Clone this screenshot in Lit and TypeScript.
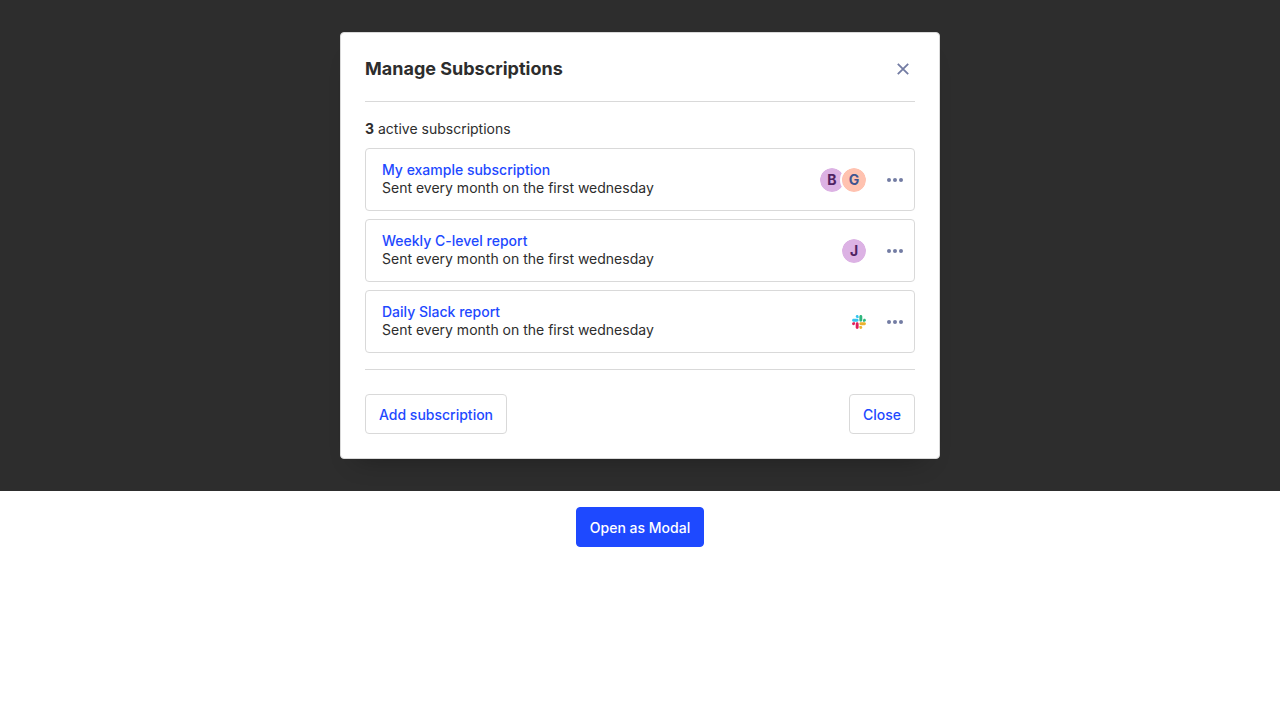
import { LitElement, html, css, svg } from "lit";
import { customElement } from "lit/decorators.js";
import { classMap } from "lit/directives/class-map.js";

interface Recipient {
  initial: string;
  tone: "plum" | "peach";
}

interface Subscription {
  title: string;
  schedule: string;
  recipients: Recipient[];
  slack?: boolean;
}

const subscriptions: Subscription[] = [
  {
    title: "My example subscription",
    schedule: "Sent every month on the first wednesday",
    recipients: [
      { initial: "B", tone: "plum" },
      { initial: "G", tone: "peach" },
    ],
  },
  {
    title: "Weekly C-level report",
    schedule: "Sent every month on the first wednesday",
    recipients: [{ initial: "J", tone: "plum" }],
  },
  {
    title: "Daily Slack report",
    schedule: "Sent every month on the first wednesday",
    recipients: [],
    slack: true,
  },
];

const slackLogo = html`
  <svg class="slack" viewBox="0 0 124 124" role="img" aria-label="Slack">
    ${svg`
      <path fill="#e01e5a" d="M26.4 78.2c0 7.1-5.8 12.9-12.9 12.9S.6 85.3.6 78.2s5.8-12.9 12.9-12.9h12.9v12.9zM32.9 78.2c0-7.1 5.8-12.9 12.9-12.9s12.9 5.8 12.9 12.9v32.3c0 7.1-5.8 12.9-12.9 12.9s-12.9-5.8-12.9-12.9V78.2z"/>
      <path fill="#36c5f0" d="M45.8 26.4c-7.1 0-12.9-5.8-12.9-12.9S38.7.6 45.8.6s12.9 5.8 12.9 12.9v12.9H45.8zM45.8 32.9c7.1 0 12.9 5.8 12.9 12.9s-5.8 12.9-12.9 12.9H13.5C6.4 58.7.6 52.9.6 45.8s5.8-12.9 12.9-12.9h32.3z"/>
      <path fill="#2eb67d" d="M97.6 45.8c0-7.1 5.8-12.9 12.9-12.9s12.9 5.8 12.9 12.9-5.8 12.9-12.9 12.9H97.6V45.8zM91.1 45.8c0 7.1-5.8 12.9-12.9 12.9s-12.9-5.8-12.9-12.9V13.5C65.3 6.4 71.1.6 78.2.6s12.9 5.8 12.9 12.9v32.3z"/>
      <path fill="#ecb22e" d="M78.2 97.6c7.1 0 12.9 5.8 12.9 12.9s-5.8 12.9-12.9 12.9-12.9-5.8-12.9-12.9V97.6h12.9zM78.2 91.1c-7.1 0-12.9-5.8-12.9-12.9s5.8-12.9 12.9-12.9h32.3c7.1 0 12.9 5.8 12.9 12.9s-5.8 12.9-12.9 12.9H78.2z"/>
    `}
  </svg>
`;

@customElement("app-root")
export class AppRoot extends LitElement {
  static styles = css`
    :host {
      display: block;
      font-family: Inter, sans-serif;
      font-size: 14px;
      line-height: 18px;
      color: #2d2d2d;
    }
    * {
      box-sizing: border-box;
    }
    .backdrop {
      display: flex;
      justify-content: center;
      padding: 32px;
      background: #2d2d2d;
    }
    .modal {
      width: 100%;
      max-width: 600px;
      padding: 24px;
      background: #fff;
      border: 1px solid #d9d9d9;
      border-radius: 4px;
      box-shadow: 0 16px 24px -16px rgba(0, 0, 0, 0.3);
    }
    header {
      display: flex;
      align-items: center;
      justify-content: space-between;
      padding-bottom: 20px;
      border-bottom: 1px solid #d9d9d9;
    }
    h1 {
      margin: 0;
      font-size: 18px;
      line-height: 24px;
      font-weight: 700;
    }
    button {
      font: inherit;
      cursor: pointer;
    }
    .icon-button {
      display: flex;
      align-items: center;
      justify-content: center;
      width: 24px;
      height: 24px;
      padding: 0;
      border: 0;
      background: none;
      color: #737ca3;
    }
    .icon-button svg {
      width: 16px;
      height: 16px;
    }
    .count {
      margin: 0;
      padding: 18px 0 10px;
    }
    ul {
      display: flex;
      flex-direction: column;
      gap: 8px;
      margin: 0;
      padding: 0 0 16px;
      list-style: none;
      border-bottom: 1px solid #d9d9d9;
    }
    .card {
      display: flex;
      align-items: center;
      padding: 12px 7px 11px 16px;
      border: 1px solid #d9d9d9;
      border-radius: 4px;
    }
    .details {
      flex: 1;
      padding-bottom: 2px;
    }
    .details p {
      margin: 0;
    }
    a {
      color: #1e49ff;
      font-weight: 500;
      text-decoration: none;
    }
    .recipients {
      display: flex;
      align-items: center;
      margin-right: 17px;
    }
    .avatar {
      width: 28px;
      height: 28px;
      margin-right: -2px;
      border: 2px solid #fff;
      border-radius: 50%;
      font-weight: 700;
      line-height: 24px;
      text-align: center;
    }
    .avatar + .avatar {
      margin-left: -4px;
    }
    .plum {
      background: #dcb2e4;
      background-clip: padding-box;
      color: #4f2262;
    }
    .peach {
      background: #ffc2b0;
      background-clip: padding-box;
      color: #3f5590;
    }
    .slack {
      display: block;
      width: 14px;
      height: 14px;
    }
    footer {
      display: flex;
      justify-content: space-between;
      padding-top: 24px;
    }
    .button {
      height: 40px;
      padding: 2px 13px 0;
      border: 1px solid #d9d9d9;
      border-radius: 4px;
      background: #fff;
      color: #1e49ff;
      font-weight: 500;
    }
    .primary {
      border-color: #1e49ff;
      background: #1e49ff;
      color: #fff;
    }
    .launcher {
      display: flex;
      justify-content: center;
      padding: 16px;
    }
  `;

  private renderSubscription(item: Subscription) {
    return html`
      <li class="card">
        <div class="details">
          <a href="#">${item.title}</a>
          <p>${item.schedule}</p>
        </div>
        <div class="recipients">
          ${item.recipients.map(
            (r) => html`<span class=${classMap({ avatar: true, [r.tone]: true })}>${r.initial}</span>`
          )}
          ${item.slack ? slackLogo : null}
        </div>
        <button class="icon-button" aria-label="More options">
          <svg viewBox="0 0 16 16" fill="currentColor" aria-hidden="true">
            <circle cx="2" cy="8" r="2" />
            <circle cx="8" cy="8" r="2" />
            <circle cx="14" cy="8" r="2" />
          </svg>
        </button>
      </li>
    `;
  }

  render() {
    return html`
      <div class="backdrop">
        <section class="modal" role="dialog" aria-labelledby="title">
          <header>
            <h1 id="title">Manage Subscriptions</h1>
            <button class="icon-button" aria-label="Close dialog">
              <svg viewBox="0 0 16 16" fill="none" stroke="currentColor" stroke-width="1.8" aria-hidden="true">
                <path d="M2.8 2.8l10.4 10.4M13.2 2.8l-10.4 10.4" />
              </svg>
            </button>
          </header>
          <p class="count"><strong>${subscriptions.length}</strong> active subscriptions</p>
          <ul>
            ${subscriptions.map((item) => this.renderSubscription(item))}
          </ul>
          <footer>
            <button class="button">Add subscription</button>
            <button class="button">Close</button>
          </footer>
        </section>
      </div>
      <div class="launcher">
        <button class="button primary">Open as Modal</button>
      </div>
    `;
  }
}
